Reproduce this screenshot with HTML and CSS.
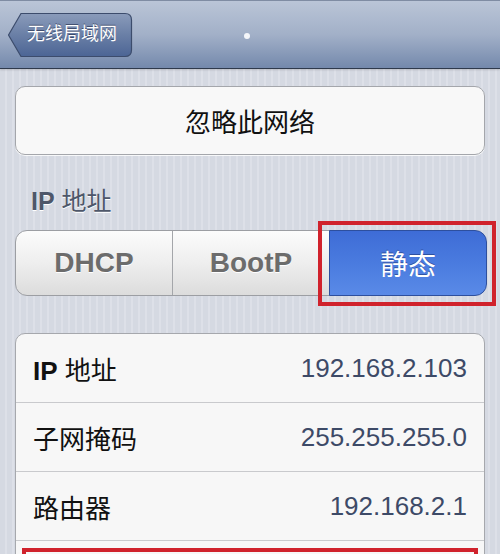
FILE: index.html
```html
<!DOCTYPE html>
<html lang="zh-CN">

<head>
    <meta charset="UTF-8" />
    <meta name="viewport" content="width=device-width, initial-scale=1.0" />
    <title>静态 IP</title>
    <link rel="stylesheet" href="styles.css">
</head>

<body>
    <nav class="navbar">
        <div class="back-btn">
            <svg class="back-shape" width="126" height="46" viewBox="0 0 126 46">
                <defs>
                    <linearGradient id="backFill" x1="0" y1="0" x2="0" y2="1">
                        <stop offset="0" stop-color="#8a9bba" />
                        <stop offset="0.5" stop-color="#6a7fa6" />
                        <stop offset="1" stop-color="#4c6595" />
                    </linearGradient>
                </defs>
                <path d="M1.5 23 L14 1.5 H118 Q124.5 1.5 124.5 8 V38 Q124.5 44.5 118 44.5 H14 Z"
                    fill="url(#backFill)" stroke="#3c4c6c" stroke-width="1.2" />
            </svg>
            <span class="back-label">无线局域网</span>
        </div>
        <span class="nav-dot"></span>
    </nav>

    <main class="content">
        <div class="forget-btn">忽略此网络</div>

        <h2 class="section-title"><b>IP</b> 地址</h2>

        <div class="segmented">
            <div class="segment">DHCP</div>
            <div class="segment">BootP</div>
            <div class="segment selected">静态</div>
            <div class="highlight seg-highlight"></div>
        </div>

        <div class="table">
            <div class="row">
                <span class="label"><b>IP</b> 地址</span>
                <span class="value">192.168.2.103</span>
            </div>
            <div class="row">
                <span class="label">子网掩码</span>
                <span class="value">255.255.255.0</span>
            </div>
            <div class="row">
                <span class="label">路由器</span>
                <span class="value">192.168.2.1</span>
            </div>
            <div class="row">
                <div class="highlight row-highlight"></div>
            </div>
        </div>
    </main>
</body>

</html>
```

FILE: styles.css
```css
* {
    box-sizing: border-box;
    margin: 0;
    padding: 0;
}

body {
    font-family: "Liberation Sans", "Noto Sans CJK SC", sans-serif;
    background: repeating-linear-gradient(to right, #d5d9e2 0, #d5d9e2 5px, #dde0e8 5px, #dde0e8 7px);
    width: 500px;
    height: 554px;
    overflow: hidden;
}

.navbar {
    position: relative;
    height: 69px;
    display: flex;
    align-items: center;
    padding-left: 7px;
    background: linear-gradient(#bac5d7, #a2b0c8 50%, #7489ac);
    border-top: 1px solid #7f8ca3;
    border-bottom: 1px solid #2f3a4c;
    box-shadow: 0 1px 2px rgba(0, 0, 0, 0.15);
}

.back-btn {
    position: relative;
    width: 126px;
    height: 46px;
    margin-top: 1px;
}

.back-shape {
    position: absolute;
    inset: 0;
}

.back-label {
    position: relative;
    display: block;
    padding-left: 20px;
    line-height: 45px;
    font-size: 18px;
    color: #fff;
    text-shadow: 0 -1px 0 rgba(30, 40, 70, 0.6);
}

.nav-dot {
    position: absolute;
    left: 244px;
    top: 32px;
    width: 6px;
    height: 6px;
    border-radius: 50%;
    background: #f4f6fa;
}

.content {
    padding: 17px 15px 0;
}

.forget-btn {
    height: 69px;
    display: flex;
    align-items: center;
    justify-content: center;
    background: #f8f8f8;
    border: 1px solid #a4a6ab;
    border-radius: 10px;
    box-shadow: 0 1px 0 rgba(255, 255, 255, 0.8);
    font-size: 26px;
    color: #111;
}

.section-title {
    margin-top: 31px;
    padding-left: 16px;
    line-height: 30px;
    font-size: 25px;
    font-weight: normal;
    color: #4e576a;
    text-shadow: 0 1px 0 #fff;
}

.segmented {
    position: relative;
    margin-top: 14px;
    height: 66px;
    display: grid;
    grid-template-columns: 156px 157px 157px;
    border: 1px solid #9c9ea3;
    border-radius: 12px;
    background: linear-gradient(#fcfcfc, #eeeeee 50%, #dcdcdc);
}

.segment {
    display: flex;
    align-items: center;
    justify-content: center;
    font-size: 28px;
    font-weight: bold;
    color: #6c6c6c;
    text-shadow: 0 1px 0 #fff;
}

.segment + .segment {
    border-left: 1px solid #a4a6aa;
}

.segment.selected {
    margin: -1px -1px -1px 0;
    border: 1px solid #2d4f9e;
    border-radius: 0 12px 12px 0;
    background: linear-gradient(#3e6cd6, #4a7bdf 50%, #5a8ae7);
    color: #fff;
    font-weight: normal;
    text-shadow: 0 -1px 0 rgba(20, 40, 100, 0.5);
}

.highlight {
    position: absolute;
    border: 4px solid #d0222c;
}

.seg-highlight {
    left: 302px;
    top: -10px;
    width: 178px;
    height: 85px;
}

.table {
    margin-top: 37px;
    background: #f7f7f7;
    border: 1px solid #a6a8ad;
    border-radius: 10px;
    overflow: hidden;
}

.row {
    position: relative;
    height: 69px;
    display: flex;
    align-items: center;
    justify-content: space-between;
    padding: 0 17px 0 17px;
    border-bottom: 1px solid #c9cacd;
}

.label {
    font-size: 26px;
    color: #111;
}

.value {
    font-size: 26px;
    color: #3d4a67;
}

.row-highlight {
    left: 6px;
    right: 6px;
    top: 7px;
    height: 56px;
}
```
